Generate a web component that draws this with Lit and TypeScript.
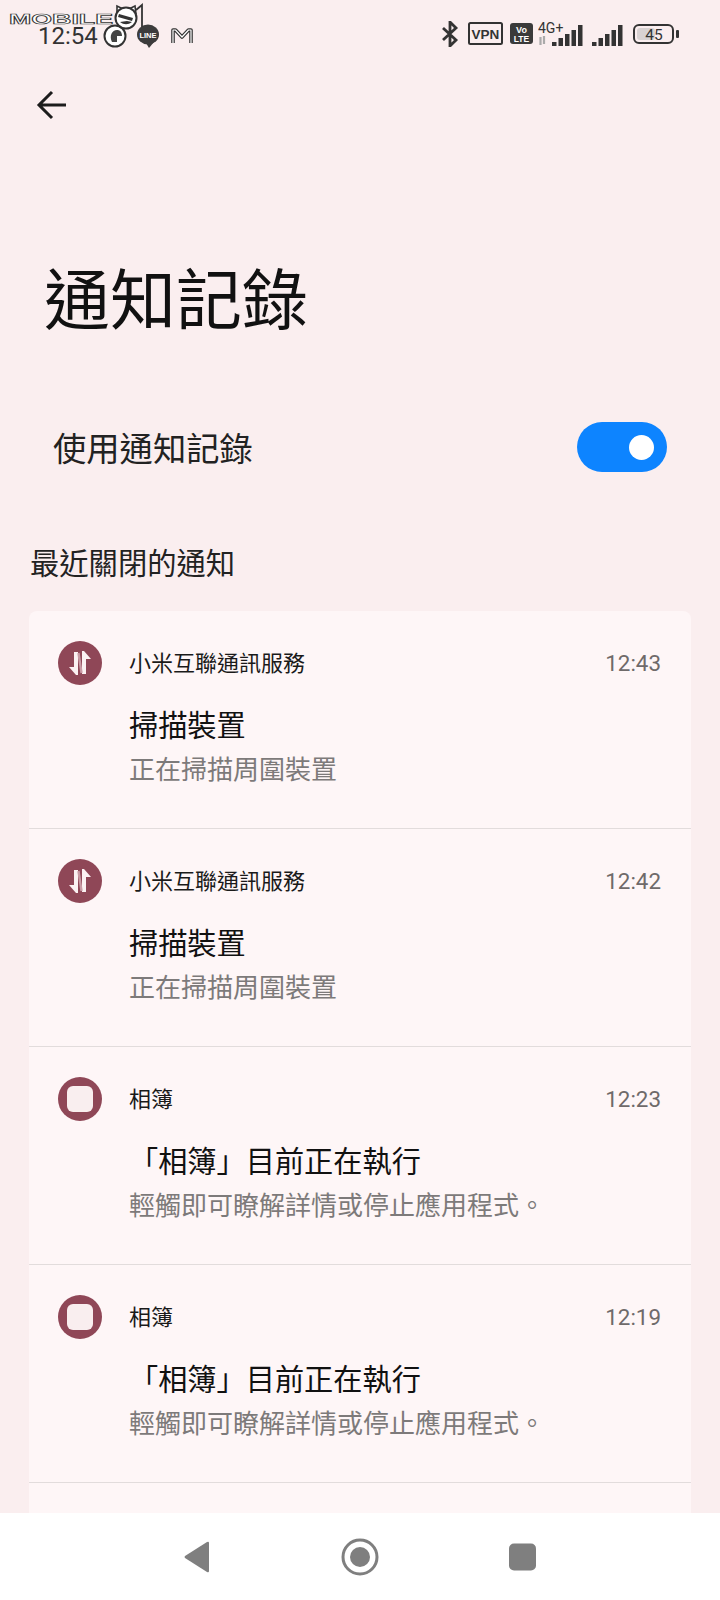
import { LitElement, html, css, svg } from "lit";
import { customElement } from "lit/decorators.js";

const ROWS = [
  { app: "小米互聯通訊服務", time: "12:43", title: "掃描裝置", sub: "正在掃描周圍裝置", kind: "arrows" },
  { app: "小米互聯通訊服務", time: "12:42", title: "掃描裝置", sub: "正在掃描周圍裝置", kind: "arrows" },
  { app: "相簿", time: "12:23", title: "「相簿」目前正在執行", sub: "輕觸即可瞭解詳情或停止應用程式。", kind: "square" },
  { app: "相簿", time: "12:19", title: "「相簿」目前正在執行", sub: "輕觸即可瞭解詳情或停止應用程式。", kind: "square" },
];

const arrows = svg`<circle cx="22" cy="22" r="22" fill="#8f4757"/>
  <path d="M18 34l-7-8h5V11h4v23z" fill="#fbf1f2"/>
  <path d="M26 10l7 8h-5v15h-4V10z" fill="#fbf1f2"/>
  <path d="M20.5 12l3 20" stroke="#c99aa4" stroke-width="2.4"/>`;
const square = svg`<circle cx="22" cy="22" r="22" fill="#8f4757"/><rect x="9" y="9" width="26" height="26" rx="6" fill="#f9eeef"/>`;

@customElement("app-root")
export class AppRoot extends LitElement {
  static styles = css`
    :host { display: block; font-family: "Noto Sans CJK TC", "Noto Sans CJK SC", "Roboto", sans-serif; color: #111; }
    .page { width: 720px; height: 1600px; display: flex; flex-direction: column; background: #faeeef; overflow: hidden; }
    .main { flex: 1; min-height: 0; overflow: hidden; position: relative; }
    .status { height: 68px; padding: 3px 41px 0 38px; display: flex; align-items: center; justify-content: space-between; box-sizing: border-box; color: #333; position: relative; }
    .left, .right { display: flex; align-items: center; }
    .right { margin-top: -4px; }
    .clock { font: 400 24px/18px Roboto, sans-serif; color: #333; margin-right: 5px; }
    .logo { position: absolute; left: 9px; top: 4px; display: block; }
    .right svg, .logo svg { display: block; }
    .back { height: 74px; padding-left: 36px; display: flex; align-items: center; }
    .big { margin: 0; padding: 109px 0 0 44px; font-size: 66px; line-height: 88px; font-weight: 400; color: #111; }
    .toggle-row { margin-top: 78px; height: 60px; padding: 0 53px 0 53px; display: flex; align-items: center; justify-content: space-between; }
    .toggle-row span { font-size: 33.3px; line-height: 44px; color: #222; }
    .switch { width: 90px; height: 50px; border-radius: 25px; background: #0d84ff; display: flex; align-items: center; justify-content: flex-end; padding-right: 13px; box-sizing: border-box; }
    .switch i { width: 25px; height: 25px; border-radius: 50%; background: #fff; display: block; }
    .section { margin: 64px 0 0 30px; font-size: 29.3px; line-height: 40px; color: #222; }
    .card { margin: 30px 29px 0; background: #fef6f7; border-radius: 8px 8px 0 0; }
    .row { height: 216px; border-bottom: 1.5px solid #e2dcdc; padding: 1px 30px 0 29px; display: grid; grid-template-columns: 44px 1fr auto; column-gap: 27px; grid-template-rows: 30px 46px 38px; align-content: start; }
    .icon { grid-row: 1; margin-top: 29px; width: 44px; height: 44px; display: block; }
    .app { font-size: 22px; line-height: 30px; margin-top: 34px; color: #1a1a1a; }
    .time { font: 400 22.4px/30px Roboto, sans-serif; color: #6f6a6a; margin-top: 36px; }
    .title { grid-column: 2 / 4; font-size: 29.2px; line-height: 40px; margin-top: 61px; color: #111; }
    .sub { grid-column: 2 / 4; font-size: 26px; line-height: 36px; color: #7d7a7a; margin-top: 62px; }
    .nav { height: 87px; background: #fff; display: flex; justify-content: center; align-items: center; flex: none; }
    .nav svg { display: block; }
  `;

  render() {
    return html`<div class="page">
      <div class="main">
        <div class="status">
          <div class="left">
            <span class="clock">12:54</span>
            <svg width="24" height="24" viewBox="0 0 24 24"><circle cx="12" cy="12" r="10.5" fill="#fff" stroke="#333" stroke-width="2"/><path d="M9 18c-3-6 0-12 5-12 3 0 5 2 5 6h-5v6H9z" fill="#444"/></svg>
            <svg width="24" height="24" viewBox="0 0 24 24" style="margin-left:9px"><ellipse cx="12" cy="10.5" rx="11" ry="10" fill="#3c3c3c"/><path d="M10 19l3 5 5-6z" fill="#3c3c3c"/><text x="12" y="13.5" text-anchor="middle" font-size="7.5" font-weight="700" fill="#fff" font-family="Liberation Sans">LINE</text></svg>
            <svg width="22" height="18" viewBox="0 0 22 18" style="margin-left:11px"><path d="M2 16V3h2.500l6.500 7 6.500-7H20v13" fill="none" stroke="#333" stroke-width="3.600" stroke-linejoin="round"/><path d="M2 16V3h2.500l6.500 7 6.500-7H20v13" fill="none" stroke="#fff" stroke-width="1.200" stroke-linejoin="round"/></svg>
          </div>
          <div class="right">
            <svg width="18" height="26" viewBox="0 0 18 26"><path d="M2 7l13 12-6 6V1l6 6L2 19" fill="none" stroke="#333" stroke-width="2.800"/></svg>
            <svg width="35" height="23" viewBox="0 0 35 23" style="margin-left:9px"><rect x="1" y="1" width="33" height="21" rx="1.5" fill="none" stroke="#333" stroke-width="2"/><text x="17.5" y="17" text-anchor="middle" font-size="13.5" font-weight="700" fill="#333" font-family="Liberation Sans">VPN</text></svg>
            <svg width="23" height="21" viewBox="0 0 23 21" style="margin-left:7px"><rect width="23" height="21" rx="3" fill="#3a3a3a"/><text x="11.5" y="9.500" text-anchor="middle" font-size="9" font-weight="700" fill="#fff" font-family="Liberation Sans">Vo</text><text x="11.5" y="18.500" text-anchor="middle" font-size="8.5" font-weight="700" fill="#fff" font-family="Liberation Sans">LTE</text></svg>
            <svg width="45" height="32" viewBox="0 -4 45 32" style="margin-left:5px"><text x="0" y="10.500" font-size="14" fill="#333" font-family="Roboto">4G+</text><path d="M2.500 15v8M6 14v8" stroke="#aaa" stroke-width="2.200"/><g fill="#333"><rect x="14" y="20" width="4.500" height="4"/><rect x="20.500" y="16" width="4.500" height="8"/><rect x="27" y="12" width="4.500" height="12"/><rect x="33.500" y="8" width="4.500" height="16"/><rect x="40" y="3" width="4.500" height="21"/></g></svg>
            <svg width="31" height="21" viewBox="0 0 31 21" style="margin-left:9px;margin-top:3px"><g fill="#333"><rect x="0" y="17" width="4.500" height="4"/><rect x="6.500" y="13" width="4.500" height="8"/><rect x="13" y="9" width="4.500" height="12"/><rect x="19.500" y="5" width="4.500" height="16"/><rect x="26" y="0" width="4.500" height="21"/></g></svg>
            <svg width="46" height="20" viewBox="0 0 46 20" style="margin-left:10px"><rect x="1" y="1" width="39" height="18" rx="5" fill="none" stroke="#333" stroke-width="2"/><rect x="4" y="4" width="18" height="12" rx="3" fill="#d8d2d2"/><text x="21" y="16" text-anchor="middle" font-size="15.500" fill="#333" font-family="Roboto">45</text><rect x="43" y="6" width="3" height="8" rx="1" fill="#333"/></svg>
          </div>
          <div class="logo">
            <svg width="136" height="26" viewBox="0 0 136 26" overflow="visible">
              <text x="0" y="20" font-size="15" font-weight="700" font-family="Liberation Sans" textLength="104" lengthAdjust="spacingAndGlyphs" fill="#fff" stroke="#333" stroke-width="0.7">MOBILE</text>
              <path d="M108 10l0-8 6 3h6l6-3 1 8" fill="#fff" stroke="#333" stroke-width="1.600"/>
              <circle cx="117" cy="14" r="10.500" fill="#fff" stroke="#333" stroke-width="2"/>
              <path d="M110 10l14 4-1 3-14-4zM111 18c4 3 8 3 12 0l-5-1z" fill="#333"/>
              <path d="M127 6l6-5v22" fill="none" stroke="#333" stroke-width="1.800"/>
            </svg>
          </div>
        </div>
        <div class="back">
          <svg width="32" height="32" viewBox="0 0 32 32"><path d="M30 16H4M16 3L3 16l13 13" fill="none" stroke="#1c1c1c" stroke-width="3"/></svg>
        </div>
        <h1 class="big">通知記錄</h1>
        <div class="toggle-row"><span>使用通知記錄</span><div class="switch"><i></i></div></div>
        <div class="section">最近關閉的通知</div>
        <div class="card">
          ${ROWS.map(
            (r) => html`<div class="row">
              <svg class="icon" viewBox="0 0 44 44">${r.kind === "arrows" ? arrows : square}</svg>
              <div class="app">${r.app}</div>
              <div class="time">${r.time}</div>
              <div class="title">${r.title}</div>
              <div class="sub">${r.sub}</div>
            </div>`
          )}
          <div class="row"><svg class="icon" viewBox="0 0 44 44">${square}</svg></div>
        </div>
      </div>
      <div class="nav">
        <svg width="352" height="50" viewBox="0 0 352 50">
          <path d="M25 11v28q0 2-2 1L1 26q-1-1 0-2L23 10q2-1 2 1z" fill="#7f7f7f"/>
          <circle cx="176" cy="25" r="17" fill="none" stroke="#7f7f7f" stroke-width="3"/><circle cx="176" cy="25" r="10" fill="#7f7f7f"/>
          <rect x="325" y="11.500" width="27" height="27" rx="5" fill="#7f7f7f"/>
        </svg>
      </div>
    </div>`;
  }
}
